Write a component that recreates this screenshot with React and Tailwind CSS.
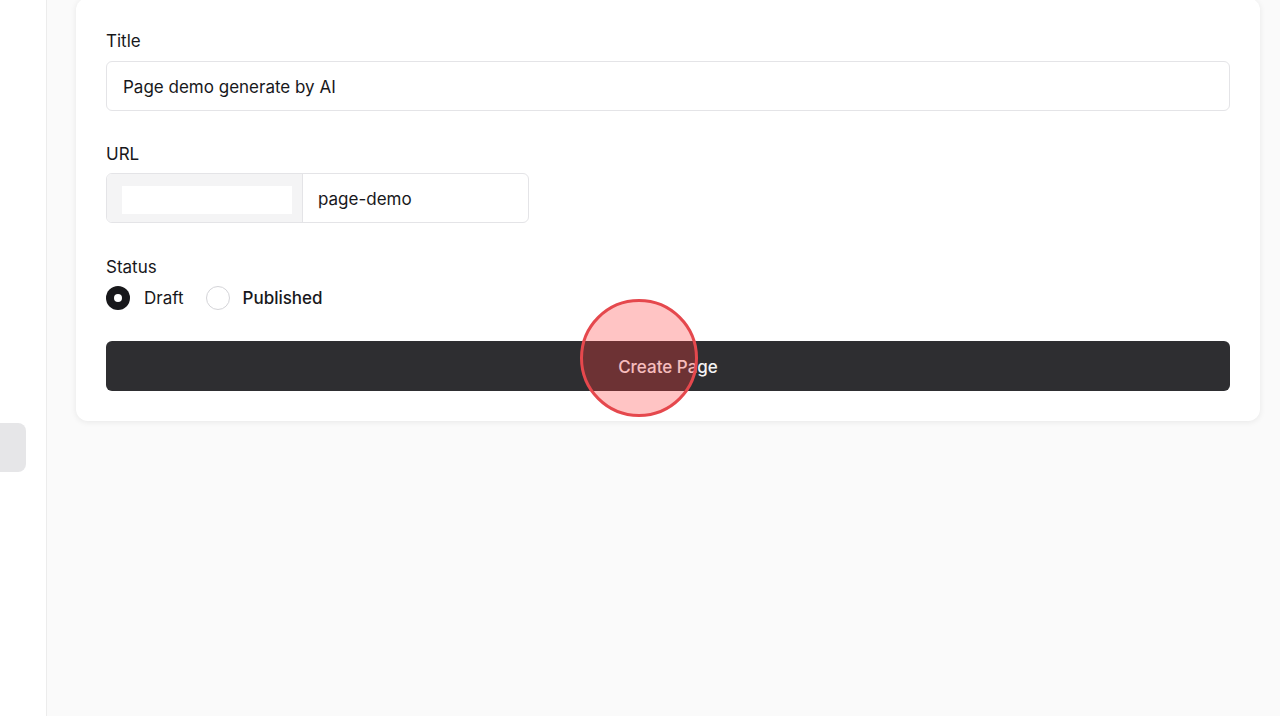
export default function App() {
  return (
    <div className="relative flex h-[716px] w-[1280px] overflow-hidden bg-[#fafafa]" style={{ fontFamily: 'Inter, "Noto Sans", sans-serif' }}>
      <aside className="w-[47px] shrink-0 border-r border-[#ececec] bg-white pt-[423px]">
        <div className="h-[49px] w-[26px] rounded-r-[8px] bg-[#e6e6e8]" />
      </aside>
      <main className="flex-1 pl-[29px] pr-[20px]">
        <div className="-mt-[2px] rounded-[12px] bg-white px-[30px] pt-[31px] pb-[30px] shadow-[0_1px_6px_rgba(0,0,0,0.08)]">
          <label className="block text-[17px] leading-[24px] text-[#18181b]">Title</label>
          <div className="mt-[8px] flex h-[50px] items-center rounded-[6px] border border-[#e4e4e7] px-[16px] pt-[3px] text-[17px] text-[#18181b]">
            Page demo generate by AI
          </div>

          <label className="mt-[31px] block text-[17px] leading-[24px] text-[#18181b]">URL</label>
          <div className="mt-[7px] flex h-[50px] w-[423px] overflow-hidden rounded-[6px] border border-[#e4e4e7]">
            <div className="flex w-[196px] shrink-0 items-center border-r border-[#e4e4e7] bg-[#f4f4f5] pl-[15px]">
              <div className="mt-[4px] h-[28px] w-[170px] bg-white" />
            </div>
            <div className="flex flex-1 items-center px-[15px] pt-[3px] text-[17px] text-[#18181b]">page-demo</div>
          </div>

          <label className="mt-[32px] block text-[17px] leading-[24px] text-[#18181b]">Status</label>
          <div className="mt-[7px] flex h-[24px] items-center text-[17px] text-[#18181b]">
            <span className="flex h-[24px] w-[24px] items-center justify-center rounded-full bg-[#18181b]">
              <span className="h-[8px] w-[8px] rounded-full bg-white" />
            </span>
            <span className="ml-[14px] pt-[2px]">Draft</span>
            <span className="ml-[22px] h-[24px] w-[24px] rounded-full border border-[#d4d4d8] bg-white" />
            <span className="ml-[13px] pt-[2px] font-medium">Published</span>
          </div>

          <button className="mt-[31px] flex h-[50px] w-full items-center justify-center rounded-[6px] bg-[#2e2e31] pt-[3px] text-[17px] font-medium text-[#f4f4f5]">
            Create Page
          </button>
        </div>
      </main>
      <div className="pointer-events-none absolute left-[580px] top-[299px] h-[118px] w-[118px] rounded-full border-[3px] border-[#e5484d] bg-[rgba(255,60,60,0.3)]" />
    </div>
  )
}
